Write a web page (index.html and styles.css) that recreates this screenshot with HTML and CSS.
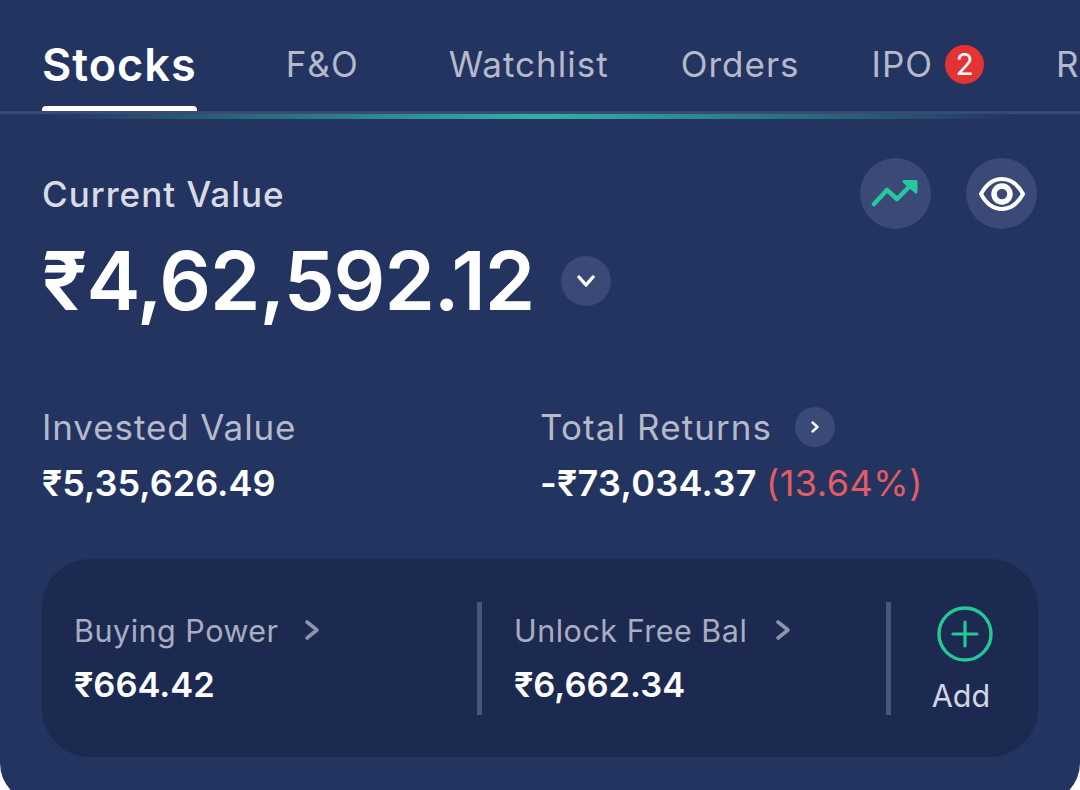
FILE: index.html
```html
<!DOCTYPE html>
<html lang="en">
<head>
    <meta charset="utf-8">
    <link rel="stylesheet" href="styles.css">
    <title>Stocks</title>
</head>
<body>
    <div class="panel">
        <!--TABS-->
        <div class="tabs">
            <div class="tab tab-active">Stocks</div>
            <div class="tab tab-fo">F&amp;O</div>
            <div class="tab">Watchlist</div>
            <div class="tab">Orders</div>
            <div class="tab tab-ipo">IPO <span class="badge">2</span></div>
            <div class="tab">Returns</div>
        </div>
        <div class="glow"></div>

        <!--CURRENT VALUE-->
        <div class="summary">
            <div class="summary-head">
                <div class="current-label">Current Value</div>
                <div class="head-icons">
                    <div class="round-icon">
                        <svg width="50" height="40" viewBox="0 0 50 40" fill="none" stroke="#25c9a0" stroke-width="4.5" stroke-linecap="round" stroke-linejoin="round">
                            <path d="M3 30 L16 16 L26 25 L42 9"/>
                            <path d="M33 7.5 L45 7.5 L45 18 Z" fill="#25c9a0" stroke-width="3"/>
                        </svg>
                    </div>
                    <div class="round-icon">
                        <svg width="46" height="34" viewBox="0 0 46 34" fill="none" stroke="#fff" stroke-width="4">
                            <path d="M2 17 C8 6 15 2 23 2 C31 2 38 6 44 17 C38 28 31 32 23 32 C15 32 8 28 2 17 Z" stroke-linejoin="round"/>
                            <circle cx="23" cy="17" r="8" stroke-width="5.5"/>
                        </svg>
                    </div>
                </div>
            </div>
            <div class="current-row">
                <div class="current-value">₹4,62,592.12</div>
                <div class="small-round">
                    <svg width="18" height="14" viewBox="0 0 18 14" fill="none" stroke="#fff" stroke-width="3.4" stroke-linecap="round" stroke-linejoin="round">
                        <path d="M2 3 L9 11 L16 3"/>
                    </svg>
                </div>
            </div>
        </div>

        <!--INVESTED AND RETURNS-->
        <div class="stats">
            <div class="stat-invested">
                <div class="stat-label">Invested Value</div>
                <div class="stat-value">₹5,35,626.49</div>
            </div>
            <div class="stat-returns">
                <div class="stat-label">Total Returns
                    <span class="tiny-round">
                        <svg width="10" height="14" viewBox="0 0 10 14" fill="none" stroke="#fff" stroke-width="2.4" stroke-linecap="round" stroke-linejoin="round">
                            <path d="M2.5 2.5 L7.5 7 L2.5 11.5"/>
                        </svg>
                    </span>
                </div>
                <div class="stat-value">-₹73,034.37 <span class="loss">(13.64%)</span></div>
            </div>
        </div>

        <!--BALANCE CARD-->
        <div class="card">
            <div class="card-col card-buying">
                <div class="card-label">Buying Power
                    <svg class="arrow" width="16" height="22" viewBox="0 0 16 22" fill="none" stroke="#8c93ab" stroke-width="3.6" stroke-linecap="round" stroke-linejoin="round">
                        <path d="M3 3 L13 11 L3 19"/>
                    </svg>
                </div>
                <div class="card-value">₹664.42</div>
            </div>
            <div class="card-line"></div>
            <div class="card-col card-unlock">
                <div class="card-label">Unlock Free Bal
                    <svg class="arrow" width="16" height="22" viewBox="0 0 16 22" fill="none" stroke="#8c93ab" stroke-width="3.6" stroke-linecap="round" stroke-linejoin="round">
                        <path d="M3 3 L13 11 L3 19"/>
                    </svg>
                </div>
                <div class="card-value">₹6,662.34</div>
            </div>
            <div class="card-line"></div>
            <div class="card-add">
                <svg width="56" height="56" viewBox="0 0 56 56" fill="none" stroke="#25c795" stroke-linecap="round">
                    <circle cx="28" cy="28" r="26" stroke-width="3.4"/>
                    <path d="M28 16 V40 M16 28 H40" stroke-width="3.2"/>
                </svg>
                <div class="add-label">Add</div>
            </div>
        </div>
    </div>
</body>
</html>
```

FILE: styles.css
```css
html, body{
    margin: 0;
    height: 100%;
    background-color: #fff;
    overflow: hidden;
}
body{
    font-family: "Inter", "Liberation Sans", sans-serif;
}
.panel{
    width: 1080px;
    height: 803px;
    background-color: #233461;
    border-radius: 0 0 40px 40px;
}
.tabs{
    display: flex;
    align-items: center;
    gap: 72px;
    box-sizing: border-box;
    height: 114px;
    padding-top: 17px;
    padding-left: 42px;
    border-bottom: 3px solid #3a4a74;
    overflow: hidden;
    white-space: nowrap;
    font-size: 35px;
    letter-spacing: 1px;
    color: #b5b9c9;
}
.tab{
    flex: none;
}
.tab-active{
    position: relative;
    align-self: stretch;
    display: flex;
    align-items: center;
    box-sizing: border-box;
    margin-right: 17px;
    color: #fff;
    font-size: 45px;
    font-weight: 600;
}
.tab-active::after{
    content: "";
    position: absolute;
    left: 0;
    right: 0;
    bottom: 0;
    height: 5px;
    border-radius: 4px 4px 0 0;
    background-color: #fff;
}
.tab-fo{
    margin-right: 18px;
}
.tab-ipo{
    display: flex;
    align-items: center;
    gap: 12px;
}
.badge{
    width: 39px;
    height: 39px;
    border-radius: 50%;
    background-color: #e53232;
    color: #fff;
    font-size: 30px;
    letter-spacing: 0;
    text-align: center;
    line-height: 39px;
}
.glow{
    height: 5px;
    background: linear-gradient(90deg, #233461 4%, #2fb3a6 50%, #233461 94%);
}
.summary{
    padding: 39px 43px 0 42px;
}
.summary-head{
    display: flex;
    justify-content: space-between;
    align-items: center;
}
.current-label{
    font-size: 35px;
    font-weight: 500;
    letter-spacing: 1px;
    color: #d8dbe7;
}
.head-icons{
    display: flex;
    gap: 35px;
}
.round-icon{
    width: 71px;
    height: 71px;
    border-radius: 50%;
    background-color: #3a4975;
    display: flex;
    align-items: center;
    justify-content: center;
}
.current-row{
    display: flex;
    align-items: center;
    gap: 27px;
    margin-top: 2px;
}
.current-value{
    font-size: 81px;
    font-weight: 600;
    letter-spacing: -1px;
    line-height: 100px;
    color: #fff;
}
.small-round{
    width: 50px;
    height: 50px;
    border-radius: 50%;
    background-color: #3a4975;
    display: flex;
    align-items: center;
    justify-content: center;
}
.stats{
    display: flex;
    padding: 0 0 0 42px;
    margin-top: 76px;
}
.stat-invested{
    width: 498px;
}
.stat-label{
    display: flex;
    align-items: center;
    gap: 23px;
    height: 40px;
    font-size: 35px;
    letter-spacing: 0.9px;
    color: #b5b9c9;
}
.stat-value{
    margin-top: 14px;
    font-size: 36px;
    font-weight: 600;
    color: #fff;
}
.stat-returns .stat-label{
    letter-spacing: 1.1px;
}
.stat-returns .stat-value{
    letter-spacing: 0.3px;
}
.loss{
    font-weight: 400;
    color: #e25c63;
    letter-spacing: 0.5px;
}
.tiny-round{
    width: 40px;
    height: 40px;
    border-radius: 50%;
    background-color: #3a4975;
    display: flex;
    align-items: center;
    justify-content: center;
}
.card{
    display: flex;
    align-items: center;
    box-sizing: border-box;
    height: 198px;
    margin: 54px 42px 0 42px;
    padding-left: 32px;
    border-radius: 48px;
    background-color: #1c2a51;
}
.card-col{
    flex: none;
}
.card-buying{
    width: 403px;
}
.card-unlock{
    width: 404px;
    padding-left: 32px;
    box-sizing: border-box;
}
.card-label{
    display: flex;
    align-items: center;
    gap: 25px;
    font-size: 30.5px;
    letter-spacing: 0.5px;
    color: #a9adc0;
}
.card-unlock .card-label{
    gap: 28px;
}
.card-value{
    margin-top: 15px;
    font-size: 34.5px;
    font-weight: 600;
    color: #fff;
}
.card-line{
    flex: none;
    width: 5px;
    height: 113px;
    background-color: #4a5679;
}
.card-add{
    flex: 1;
    display: flex;
    flex-direction: column;
    align-items: center;
    gap: 15px;
    padding-top: 4px;
}
.add-label{
    padding-right: 7px;
    font-size: 30.5px;
    color: #d2d6e4;
}
```
